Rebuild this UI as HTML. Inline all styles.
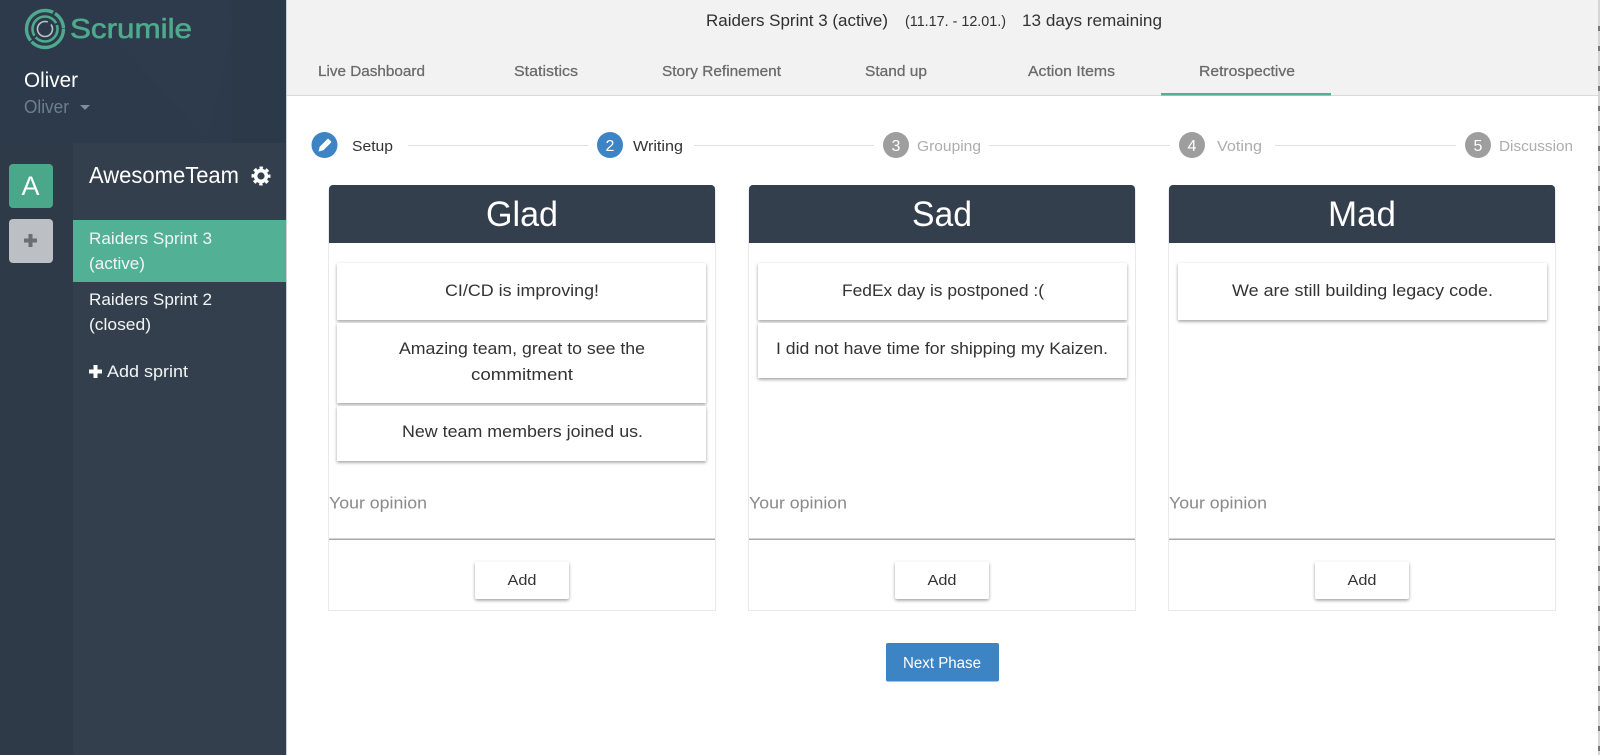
<!DOCTYPE html>
<html lang="en"><head><meta charset="utf-8"><title>Scrumile</title>
<style>
html,body{margin:0;padding:0;width:1600px;height:755px;overflow:hidden;background:#fff}
svg{display:block}
text{font-family:"Liberation Sans",sans-serif}
.n{font-size:17px;fill:#333}
.h{font-size:35px;fill:#fff}
.p{font-size:17px;fill:#8a8a8a}
.tab{font-size:14.5px;fill:#6a6a6a;stroke:#6a6a6a;stroke-width:.25}
.s{font-size:15px}
.w{font-size:17px;fill:#f2f5f5}
.num{font-size:16px;fill:#fff;text-anchor:middle}
</style></head><body>
<svg width="1600" height="755" viewBox="0 0 1600 755" xmlns="http://www.w3.org/2000/svg">
<defs>
<filter id="sh" x="-5%" y="-10%" width="110%" height="125%"><feDropShadow dx="0" dy="1.5" stdDeviation="1.5" flood-color="#000" flood-opacity=".38"/></filter>
</defs>
<rect width="1600" height="755" fill="#fff"/>

<!-- sidebar -->
<rect x="0" y="0" width="286" height="755" fill="#2c3a4b"/>
<polygon points="120,0 230,0 232,30 208,140 120,45" fill="#2d3b4c"/>
<polygon points="232,0 286,0 286,143 232,143" fill="#2b3949"/>
<polygon points="0,143 73,143 73,755 0,755" fill="#2e3a47"/>
<rect x="73" y="143" width="213" height="612" fill="#343f4d"/>
<rect x="286" y="0" width="1" height="755" fill="#c9ced3"/>

<!-- logo -->
<g fill="none" stroke="#4fa98c" transform="translate(45,29)">
<circle r="18.500" stroke-width="3.400" stroke-dasharray="44 1.500 50 2 18 1.500"/>
<circle r="12.500" stroke-width="2.600" stroke-dasharray="30 2 40 2"/>
<circle r="7.500" stroke="#b9c4c6" stroke-width="1.600" stroke-dasharray="38 4"/>
</g>
<text x="70" y="38" font-size="28" fill="#4fa98c" stroke="#4fa98c" stroke-width=".6" textLength="122" lengthAdjust="spacingAndGlyphs">Scrumile</text>

<text x="24" y="87" font-size="21" fill="#fff" textLength="54" lengthAdjust="spacingAndGlyphs">Oliver</text>
<text x="24" y="113" font-size="18" fill="#6e7f92" textLength="45" lengthAdjust="spacingAndGlyphs">Oliver</text>
<polygon points="80,105 90,105 85,110" fill="#7f8d9e"/>

<!-- team tiles -->
<rect x="9" y="164" width="44" height="44" rx="4" fill="#4aa78a"/>
<text x="30.500" y="195" font-size="27" fill="#fff" text-anchor="middle">A</text>
<rect x="9" y="219" width="44" height="44" rx="4" fill="#bcbfc4"/>
<path d="M30.500 234v13M24 240.500h13" stroke="#6b6e73" stroke-width="4" fill="none"/>

<text x="89" y="183" font-size="23" fill="#fff" textLength="150" lengthAdjust="spacingAndGlyphs">AwesomeTeam</text>
<g transform="translate(261,176)" fill="none" stroke="#fff">
<circle r="5.400" stroke-width="3.600"/>
<circle r="8" stroke-width="3" stroke-dasharray="3.400 2.883" stroke-dashoffset="1.700"/>
</g>

<rect x="73" y="220" width="213" height="62" fill="#52b094"/>
<text x="89" y="244" class="w" fill="#fff" textLength="123" lengthAdjust="spacingAndGlyphs">Raiders Sprint 3</text>
<text x="89" y="269" class="w" textLength="56" lengthAdjust="spacingAndGlyphs">(active)</text>
<text x="89" y="305" class="w" textLength="123" lengthAdjust="spacingAndGlyphs">Raiders Sprint 2</text>
<text x="89" y="330" class="w" textLength="62" lengthAdjust="spacingAndGlyphs">(closed)</text>
<path d="M95.500 365v13M89 371.500h13" stroke="#fff" stroke-width="4" fill="none"/>
<text x="107" y="377" class="w" textLength="81" lengthAdjust="spacingAndGlyphs">Add sprint</text>

<!-- header -->
<rect x="287" y="0" width="1313" height="95" fill="#f2f2f2"/>
<rect x="287" y="95" width="1313" height="1" fill="#d9d9d9"/>
<text x="706" y="26" font-size="17" fill="#2f2f2f" textLength="182" lengthAdjust="spacingAndGlyphs">Raiders Sprint 3 (active)</text>
<text x="905" y="26" font-size="15" fill="#333" textLength="101" lengthAdjust="spacingAndGlyphs">(11.17. - 12.01.)</text>
<text x="1022" y="26" font-size="17" fill="#333" textLength="140" lengthAdjust="spacingAndGlyphs">13 days remaining</text>

<text x="318" y="76" class="tab" textLength="107" lengthAdjust="spacingAndGlyphs">Live Dashboard</text>
<text x="514" y="76" class="tab" textLength="64" lengthAdjust="spacingAndGlyphs">Statistics</text>
<text x="662" y="76" class="tab" textLength="119" lengthAdjust="spacingAndGlyphs">Story Refinement</text>
<text x="865" y="76" class="tab" textLength="62" lengthAdjust="spacingAndGlyphs">Stand up</text>
<text x="1028" y="76" class="tab" textLength="87" lengthAdjust="spacingAndGlyphs">Action Items</text>
<text x="1199" y="76" class="tab" textLength="96" lengthAdjust="spacingAndGlyphs">Retrospective</text>
<rect x="1161" y="93" width="170" height="2.500" fill="#52b094"/>

<!-- stepper -->
<g fill="#e0e0e0">
<rect x="408" y="145" width="180" height="1"/><rect x="694" y="145" width="180" height="1"/>
<rect x="989" y="145" width="181" height="1"/><rect x="1275" y="145" width="181" height="1"/>
</g>
<circle cx="324.500" cy="145" r="13" fill="#3d84c4"/>
<path d="M318.500 151.500l1.200-4.800 7.600-7.600a1 1 0 0 1 1.400 0l2.200 2.200a1 1 0 0 1 0 1.400l-7.600 7.600z" fill="#fff"/>
<circle cx="610" cy="145" r="13" fill="#3d84c4"/>
<text x="610" y="151" class="num">2</text>
<circle cx="896" cy="145" r="13" fill="#9e9e9e"/>
<text x="896" y="151" class="num">3</text>
<circle cx="1192" cy="145" r="13" fill="#9e9e9e"/>
<text x="1192" y="151" class="num">4</text>
<circle cx="1478" cy="145" r="13" fill="#9e9e9e"/>
<text x="1478" y="151" class="num">5</text>
<text x="352" y="151" class="s" fill="#333" textLength="41" lengthAdjust="spacingAndGlyphs">Setup</text>
<text x="633" y="151" class="s" fill="#333" textLength="50" lengthAdjust="spacingAndGlyphs">Writing</text>
<text x="917" y="151" class="s" fill="#adadad" textLength="64" lengthAdjust="spacingAndGlyphs">Grouping</text>
<text x="1217" y="151" class="s" fill="#adadad" textLength="45" lengthAdjust="spacingAndGlyphs">Voting</text>
<text x="1499" y="151" class="s" fill="#adadad" textLength="74" lengthAdjust="spacingAndGlyphs">Discussion</text>

<!-- column 1 -->
<rect x="328.500" y="190" width="387" height="420.500" fill="#fff" stroke="#e9e9e9"/>
<path d="M329 243V189a4 4 0 0 1 4-4H711a4 4 0 0 1 4 4V243z" fill="#343f4d"/>
<text x="486" y="226" class="h" textLength="72" lengthAdjust="spacingAndGlyphs">Glad</text>
<rect x="337" y="263" width="369" height="57" fill="#fff" filter="url(#sh)"/>
<rect x="337" y="323" width="369" height="80" fill="#fff" filter="url(#sh)"/>
<rect x="337" y="406" width="369" height="55" fill="#fff" filter="url(#sh)"/>
<text x="445" y="296" class="n" textLength="154" lengthAdjust="spacingAndGlyphs">CI/CD is improving!</text>
<text x="399" y="354" class="n" textLength="246" lengthAdjust="spacingAndGlyphs">Amazing team, great to see the</text>
<text x="471" y="380" class="n" textLength="102" lengthAdjust="spacingAndGlyphs">commitment</text>
<text x="402" y="437" class="n" textLength="241" lengthAdjust="spacingAndGlyphs">New team members joined us.</text>
<text x="329" y="508.500" class="p" textLength="98" lengthAdjust="spacingAndGlyphs">Your opinion</text>
<rect x="329" y="538.500" width="386" height="1.500" fill="#a8a8a8"/>
<rect x="475" y="561.500" width="94" height="37.500" rx="2" fill="#fff" filter="url(#sh)"/>
<text x="507.500" y="585" class="s" fill="#333" textLength="29" lengthAdjust="spacingAndGlyphs">Add</text>

<!-- column 2 -->
<rect x="748.500" y="190" width="387" height="420.500" fill="#fff" stroke="#e9e9e9"/>
<path d="M749 243V189a4 4 0 0 1 4-4H1131a4 4 0 0 1 4 4V243z" fill="#343f4d"/>
<text x="912" y="226" class="h" textLength="60" lengthAdjust="spacingAndGlyphs">Sad</text>
<rect x="758" y="263" width="369" height="57" fill="#fff" filter="url(#sh)"/>
<rect x="758" y="323" width="369" height="55" fill="#fff" filter="url(#sh)"/>
<text x="842" y="296" class="n" textLength="202" lengthAdjust="spacingAndGlyphs">FedEx day is postponed :(</text>
<text x="776" y="354" class="n" textLength="332" lengthAdjust="spacingAndGlyphs">I did not have time for shipping my Kaizen.</text>
<text x="749" y="508.500" class="p" textLength="98" lengthAdjust="spacingAndGlyphs">Your opinion</text>
<rect x="749" y="538.500" width="386" height="1.500" fill="#a8a8a8"/>
<rect x="895" y="561.500" width="94" height="37.500" rx="2" fill="#fff" filter="url(#sh)"/>
<text x="927.500" y="585" class="s" fill="#333" textLength="29" lengthAdjust="spacingAndGlyphs">Add</text>

<!-- column 3 -->
<rect x="1168.500" y="190" width="387" height="420.500" fill="#fff" stroke="#e9e9e9"/>
<path d="M1169 243V189a4 4 0 0 1 4-4H1551a4 4 0 0 1 4 4V243z" fill="#343f4d"/>
<text x="1328" y="226" class="h" textLength="68" lengthAdjust="spacingAndGlyphs">Mad</text>
<rect x="1178" y="263" width="369" height="57" fill="#fff" filter="url(#sh)"/>
<text x="1232" y="296" class="n" textLength="261" lengthAdjust="spacingAndGlyphs">We are still building legacy code.</text>
<text x="1169" y="508.500" class="p" textLength="98" lengthAdjust="spacingAndGlyphs">Your opinion</text>
<rect x="1169" y="538.500" width="386" height="1.500" fill="#a8a8a8"/>
<rect x="1315" y="561.500" width="94" height="37.500" rx="2" fill="#fff" filter="url(#sh)"/>
<text x="1347.500" y="585" class="s" fill="#333" textLength="29" lengthAdjust="spacingAndGlyphs">Add</text>

<!-- next phase -->
<rect x="886" y="643" width="113" height="38.500" rx="2" fill="#3d84c4"/>
<text x="903" y="668" font-size="15.500" fill="#fff" textLength="78" lengthAdjust="spacingAndGlyphs">Next Phase</text>

<!-- right edge -->
<rect x="1598" y="0" width="2" height="755" fill="#d5d5d5"/>
<path d="M1599 26V755" stroke="#777" stroke-width="2" stroke-dasharray="5 15"/>
</svg>
</body></html>
